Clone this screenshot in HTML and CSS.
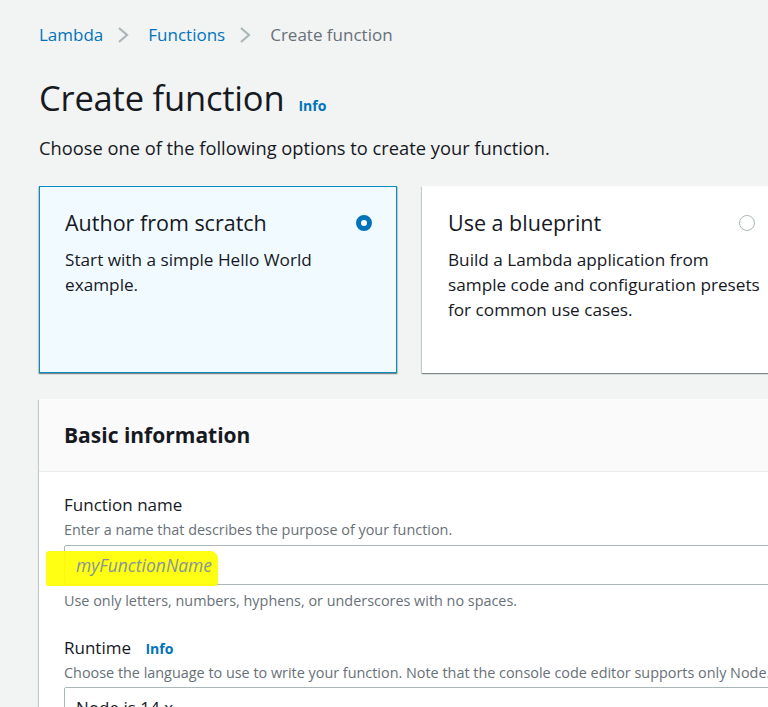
FILE: index.html
```html
<!DOCTYPE html>
<html lang="en">
<head>
<meta charset="utf-8">
<title>Create function</title>
<link rel="stylesheet" href="styles.css">
</head>
<body>
<div class="page">
  <nav class="crumbs">
    <a class="crumb-link">Lambda</a>
    <svg class="chev" width="12" height="18" viewBox="0 0 12 18"><path d="M2 2 L10 9 L2 16" fill="none" stroke="#aab7b8" stroke-width="2.2"/></svg>
    <a class="crumb-link">Functions</a>
    <svg class="chev" width="12" height="18" viewBox="0 0 12 18"><path d="M2 2 L10 9 L2 16" fill="none" stroke="#aab7b8" stroke-width="2.2"/></svg>
    <span class="crumb-current">Create function</span>
  </nav>

  <div class="title-row">
    <h1 class="title">Create function</h1>
    <a class="info">Info</a>
  </div>
  <p class="lead">Choose one of the following options to create your function.</p>

  <div class="tiles">
    <div class="tile tile-selected">
      <div class="tile-head">
        <span class="tile-title">Author from scratch</span>
        <span class="radio radio-on"></span>
      </div>
      <p class="tile-desc">Start with a simple Hello World example.</p>
    </div>
    <div class="tile tile-wide">
      <div class="tile-head">
        <span class="tile-title">Use a blueprint</span>
        <span class="radio"></span>
      </div>
      <p class="tile-desc">Build a Lambda application from sample code and configuration presets for common use cases.</p>
    </div>
  </div>

  <section class="panel">
    <div class="panel-head">
      <h2 class="panel-title">Basic information</h2>
    </div>
    <div class="panel-body">
      <div class="field">
        <div class="label">Function name</div>
        <div class="hint">Enter a name that describes the purpose of your function.</div>
        <div class="input">
          <span class="highlight"></span>
          <span class="placeholder">myFunctionName</span>
        </div>
        <div class="hint after">Use only letters, numbers, hyphens, or underscores with no spaces.</div>
      </div>
      <div class="field field-runtime">
        <div class="label">Runtime <a class="info small">Info</a></div>
        <div class="hint">Choose the language to use to write your function. Note that the console code editor supports only Node.js, Python, and Ruby.</div>
        <div class="input select"><span class="value">Node.js 14.x</span></div>
      </div>
    </div>
  </section>
</div>
</body>
</html>
```

FILE: styles.css
```css
html, body {
  margin: 0;
  padding: 0;
  background: #f2f3f3;
  overflow: hidden;
}
body {
  font-family: "Open Sans", "Noto Sans", sans-serif;
  color: #16191f;
  width: 768px;
  height: 707px;
}
.page {
  padding: 22px 0 0 39px;
  width: 1000px;
}
.crumbs {
  display: flex;
  align-items: center;
  font-size: 17px;
  line-height: 24px;
  height: 26px;
}
.crumb-link { color: #0073bb; }
.crumb-current { color: #687078; }
.chev { margin: 0 19px 0 14px; }

.title-row {
  display: flex;
  align-items: baseline;
  margin-top: 30px;
  height: 40px;
}
.title {
  margin: 0;
  font-size: 34.5px;
  font-weight: 400;
  line-height: 40px;
  letter-spacing: -0.2px;
}
.info {
  color: #0073bb;
  font-weight: 700;
  font-size: 14px;
  margin-left: 14px;
}
.lead {
  margin: 18px 0 0 0;
  font-size: 18.3px;
  line-height: 24px;
}
.tiles {
  display: flex;
  gap: 25px;
  margin-top: 26px;
}
.tile {
  box-sizing: border-box;
  width: 358px;
  height: 187px;
  padding: 18px 0 0 25px;
  background: #fff;
  box-shadow: 0 1px 1px 0 rgba(0,28,36,.3), 1px 1px 1px 0 rgba(0,28,36,.15), -1px 1px 1px 0 rgba(0,28,36,.15);
  border: 1px solid transparent;
  flex: none;
}
.tile-wide { width: 400px; }
.tile-selected {
  background: #f1faff;
  border-color: #0a8bbd;
}
.tile-head {
  display: flex;
  align-items: center;
  justify-content: space-between;
  width: 307px;
  height: 36px;
}
.tile-title {
  font-size: 21.5px;
  line-height: 30px;
}
.radio {
  width: 14px;
  height: 14px;
  border-radius: 50%;
  border: 1px solid #aab7b8;
  background: #fff;
}
.radio-on {
  width: 6px;
  height: 6px;
  border: 5px solid #0073bb;
}
.tile-desc {
  margin: 6px 0 0 0;
  font-size: 17.2px;
  line-height: 25px;
  width: 300px;
}
.tile-wide .tile-desc { width: 312px; }

.panel {
  margin-top: 26px;
  background: #fff;
  box-shadow: 0 1px 1px 0 rgba(0,28,36,.3), 1px 1px 1px 0 rgba(0,28,36,.15), -1px 1px 1px 0 rgba(0,28,36,.15);
  width: 900px;
}
.panel-head {
  background: #fafafa;
  border-bottom: 1px solid #eaeded;
  height: 72px;
  display: flex;
  align-items: center;
  padding-left: 25px;
}
.panel-title {
  margin: 0;
  font-size: 21px;
  font-weight: 700;
  line-height: 30px;
}
.panel-body {
  padding: 20px 0 0 25px;
}
.field + .field { margin-top: 24px; }
.label {
  font-size: 17px;
  line-height: 26px;
}
.info.small { margin-left: 10px; }
.hint {
  margin-top: 2px;
  font-size: 14.4px;
  line-height: 20px;
  color: #687078;
  white-space: nowrap;
}
.field-runtime .hint { margin-top: 1px; }
.hint.after { margin-top: 6px; }
.input {
  position: relative;
  margin-top: 5px;
  height: 38px;
  border: 1px solid #aab7b8;
  border-radius: 2px;
  background: #fff;
  display: flex;
  align-items: center;
  padding-left: 11px;
}
.select { margin-top: 4px; }
.placeholder {
  position: relative;
  font-style: italic;
  font-size: 17.5px;
  color: #879596;
}
.highlight {
  position: absolute;
  left: -19px;
  top: 5px;
  width: 172px;
  height: 35px;
  background: #ffff00;
  border-radius: 3px 8px 4px 2px;
  opacity: .92;
}
.value {
  font-size: 17px;
  line-height: 24px;
  margin-top: 2px;
}
```
